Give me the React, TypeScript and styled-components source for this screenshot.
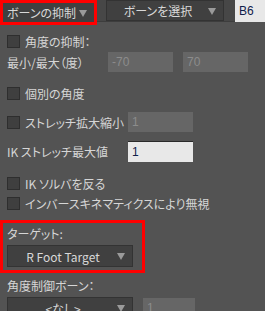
import React from 'react';
import styled, { createGlobalStyle } from 'styled-components';

const GlobalStyle = createGlobalStyle`
  html, body {
    margin: 0;
    padding: 0;
    background: #535353;
  }
  body {
    font-family: "Noto Sans CJK JP", "Noto Sans", sans-serif;
    font-feature-settings: "palt";
    font-size: 12px;
    color: #d6d6d6;
    overflow: hidden;
  }
`;

const Panel = styled.div`
  width: 265px;
  height: 311px;
  background: #535353;
  overflow: hidden;
`;

const Toolbar = styled.div`
  display: flex;
  align-items: flex-start;
  height: 22px;
  background: #474747;
  border-bottom: 1px solid #3d3d3d;
  box-sizing: border-box;
`;

const Select = styled.div<{ $w: number; $h?: number; $center?: boolean; $flat?: boolean }>`
  position: relative;
  display: flex;
  align-items: center;
  justify-content: ${(p) => (p.$center ? 'center' : 'flex-start')};
  width: ${(p) => p.$w}px;
  height: ${(p) => p.$h ?? 22}px;
  box-sizing: border-box;
  padding: ${(p) => (p.$center ? '0 14px 0 0' : '0 0 0 4px')};
  background: #404040;
  border: ${(p) => (p.$flat ? 'none' : '1px solid #333')};
  color: #d8d8d8;
  white-space: nowrap;
  flex-shrink: 0;
`;

const Arrow = styled.span`
  position: absolute;
  right: 7px;
  top: 50%;
  margin-top: -3px;
  width: 0;
  height: 0;
  border-left: 4px solid transparent;
  border-right: 4px solid transparent;
  border-top: 7px solid #9a9a9a;
`;

const Marked = styled.div`
  outline: 3px solid #ff0000;
  flex-shrink: 0;
`;

const TextBox = styled.div<{ $w: number; $h?: number; $light?: boolean }>`
  display: flex;
  align-items: center;
  width: ${(p) => p.$w}px;
  height: ${(p) => p.$h ?? 20}px;
  box-sizing: border-box;
  padding-left: 4px;
  flex-shrink: 0;
  background: ${(p) => (p.$light ? '#e8e8e8' : '#666666')};
  color: ${(p) => (p.$light ? '#10214a' : '#8c8c8c')};
  border-top: ${(p) => (p.$light ? '1px solid #2a2a2a' : 'none')};
  font-family: "Liberation Sans", "Noto Sans CJK JP", sans-serif;
  font-size: 12px;
`;

const Body = styled.div`
  display: flex;
  flex-direction: column;
  padding: 9px 0 0 7px;
`;

const Row = styled.div<{ $h?: number; $mt?: number }>`
  display: flex;
  align-items: center;
  height: ${(p) => p.$h ?? 20}px;
  margin-top: ${(p) => p.$mt ?? 0}px;
  white-space: nowrap;
`;

const Box = styled.span`
  width: 13px;
  height: 13px;
  box-sizing: border-box;
  background: #3f3f3f;
  border: 1px solid #2e2e2e;
  margin-right: 5px;
  flex-shrink: 0;
`;

const Label = styled.span<{ $w?: number }>`
  width: ${(p) => (p.$w ? `${p.$w}px` : 'auto')};
  flex-shrink: 0;
`;

const Section = styled.div`
  display: flex;
  flex-direction: column;
  width: 145px;
  box-sizing: border-box;
  margin: 7px 0 0 -7px;
  padding: 0 0 3px 4px;
  border: 3px solid #ff0000;
`;

const CheckRow = ({ label, h, mt }: { label: string; h?: number; mt?: number }) => (
  <Row $h={h} $mt={mt}>
    <Box />
    <span>{label}</span>
  </Row>
);

export default function App() {
  return (
    <Panel>
      <GlobalStyle />
      <Toolbar>
        <Marked style={{ margin: '3px 12px 0 3px' }}>
          <Select $w={91} $h={19} $flat>
            ボーンの抑制
            <Arrow />
          </Select>
        </Marked>
        <Select $w={118} $h={21} $center>
          ボーンを選択
          <Arrow />
        </Select>
        <TextBox $w={60} $h={22} $light style={{ marginLeft: 11, borderTop: 'none' }}>
          B6
        </TextBox>
      </Toolbar>

      <Body>
        <CheckRow label="角度の抑制：" />
        <Row $mt={1}>
          <Label $w={101}>最小/最大（度）</Label>
          <TextBox $w={65}>-70</TextBox>
          <TextBox $w={65} style={{ marginLeft: 10 }}>
            70
          </TextBox>
        </Row>
        <CheckRow label="個別の角度" mt={11} />
        <Row $mt={9}>
          <Box />
          <Label $w={103}>ストレッチ拡大縮小</Label>
          <TextBox $w={65}>1</TextBox>
        </Row>
        <Row $h={21} $mt={9}>
          <Label $w={121}>IK ストレッチ最大値</Label>
          <TextBox $w={65} $h={21} $light>
            1
          </TextBox>
        </Row>
        <CheckRow label="IK ソルバを反る" mt={11} />
        <CheckRow label="インバースキネマティクスにより無視" />

        <Section>
          <Row>ターゲット:</Row>
          <Select $w={126} $center style={{ marginTop: 2 }}>
            R Foot Target
            <Arrow />
          </Select>
        </Section>

        <Row $mt={2}>角度制御ボーン：</Row>
        <Row $h={22} $mt={2}>
          <Select $w={126} $center>
            &lt;なし&gt;
            <Arrow />
          </Select>
          <TextBox $w={52} style={{ marginLeft: 10 }}>
            1
          </TextBox>
        </Row>
      </Body>
    </Panel>
  );
}
